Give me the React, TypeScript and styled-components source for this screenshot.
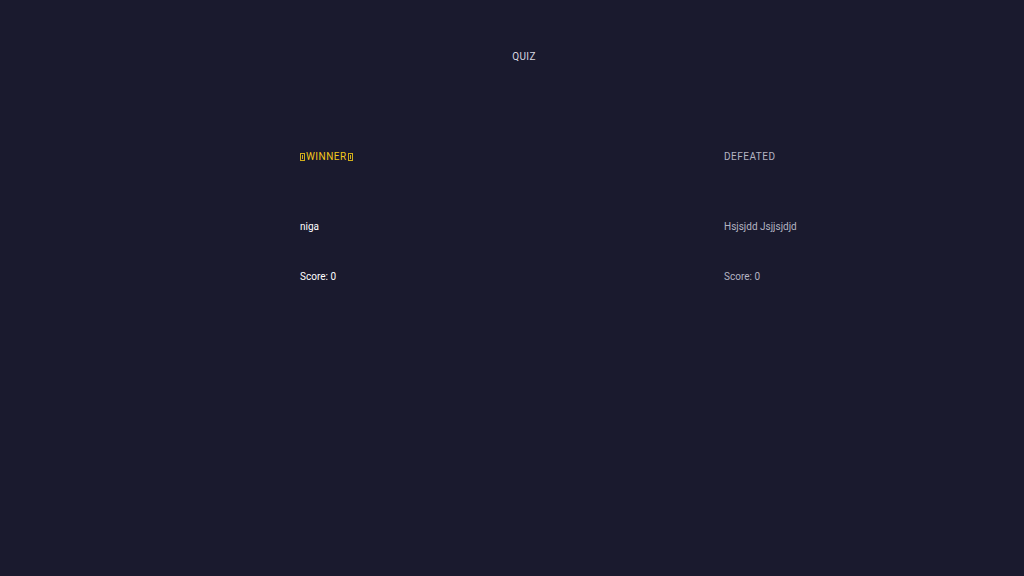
import styled, { createGlobalStyle } from 'styled-components';

const GlobalStyle = createGlobalStyle`
  html, body {
    margin: 0;
    padding: 0;
    background: #1a1a2e;
    font-family: Roboto, 'Noto Sans', sans-serif;
  }
`;

const Page = styled.div`
  min-height: 576px;
  background: #1a1a2e;
  display: flex;
  flex-direction: column;
`;

const Title = styled.h1`
  margin: 0;
  padding: 51px 0 0 24px;
  height: 12px;
  line-height: 12px;
  font-size: 10px;
  font-weight: 400;
  letter-spacing: 0.4px;
  color: #d8d8e0;
  text-align: center;
`;

const Players = styled.div`
  display: grid;
  grid-template-columns: 424px 300px;
  padding: 88px 0 0 300px;
`;

const Player = styled.div<{ $winner: boolean }>`
  display: flex;
  flex-direction: column;
  color: ${({ $winner }) => ($winner ? '#ffffff' : '#b4b4c2')};
  font-size: 10px;
  line-height: 12px;
`;

const Status = styled.div<{ $winner: boolean }>`
  display: flex;
  align-items: center;
  gap: 1px;
  letter-spacing: 0.5px;
  color: ${({ $winner }) => ($winner ? '#f2c81a' : '#b4b4c2')};
  margin-bottom: 58px;
`;

// missing-glyph box, as the trophy shows in the reference
const Tofu = styled.span`
  display: inline-block;
  box-sizing: border-box;
  width: 5px;
  height: 8px;
  border: 1px solid #f2c81a;
  background: linear-gradient(#f2c81a, #f2c81a) center / 1px 4px no-repeat;
  opacity: 0.85;
`;

const Name = styled.div`
  margin-bottom: 38px;
`;

const Score = styled.div``;

const players = [
  { name: 'niga', score: 0, winner: true },
  { name: 'Hsjsjdd Jsjjsjdjd', score: 0, winner: false },
];

export default function App() {
  return (
    <>
      <GlobalStyle />
      <Page>
        <Title>QUIZ</Title>
        <Players>
          {players.map((p) => (
            <Player key={p.name} $winner={p.winner}>
              <Status $winner={p.winner}>
                {p.winner ? (
                  <>
                    <Tofu />
                    WINNER
                    <Tofu />
                  </>
                ) : (
                  'DEFEATED'
                )}
              </Status>
              <Name>{p.name}</Name>
              <Score>Score: {p.score}</Score>
            </Player>
          ))}
        </Players>
      </Page>
    </>
  );
}
